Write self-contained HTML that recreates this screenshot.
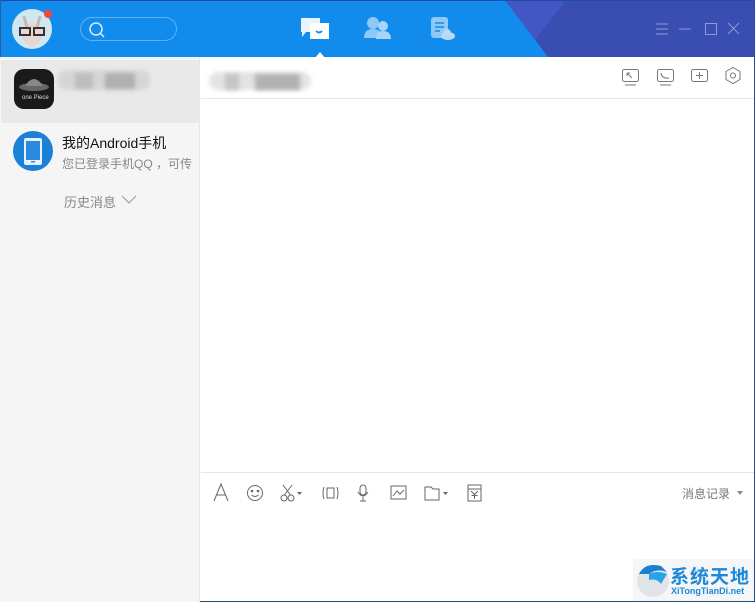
<!DOCTYPE html>
<html><head><meta charset="utf-8"><style>
*{margin:0;padding:0;box-sizing:border-box}
body{width:755px;height:602px;overflow:hidden;background:#fff;font-family:"Liberation Sans","Noto Sans CJK SC",sans-serif;position:relative}
.abs{position:absolute}
.side{left:0;top:57px;width:200px;height:545px;background:#f5f5f5;border-right:1px solid #e6e6e6}
.bl{filter:blur(2px)}
</style></head><body>
<div class="abs" style="left:0;top:0;width:755px;height:57px;background:#118bec"></div>
<svg class="abs" style="left:0;top:0" width="755" height="57">
<polygon points="505,0 755,0 755,57 548,57" fill="#3a4db0"/>
<polygon points="505,0 566,0 535,40" fill="#4357c4"/>
<rect x="0" y="0" width="755" height="1" fill="#1f4aa8"/>
</svg>
<div class="abs" style="left:0;top:0;width:1px;height:602px;background:#2a5fa8"></div>
<div class="abs" style="left:754px;top:0;width:1px;height:602px;background:#2a4a9a"></div>
<div class="abs" style="left:0;top:601px;width:755px;height:1px;background:#2a4a7a"></div>
<svg class="abs" style="left:12px;top:8px" width="44" height="42">
<circle cx="20" cy="21" r="20" fill="#cfe7ee"/>
<ellipse cx="20" cy="26" rx="10" ry="12" fill="#e8d6d0"/>
<path d="M12 8 L15 20 M28 8 L25 20" stroke="#c8b8b8" stroke-width="3"/>
<rect x="8" y="20" width="10" height="7" fill="none" stroke="#333" stroke-width="2"/>
<rect x="22" y="20" width="10" height="7" fill="none" stroke="#333" stroke-width="2"/>
<circle cx="36" cy="6" r="4" fill="#f04a3a"/>
</svg>
<div class="abs" style="left:80px;top:17px;width:97px;height:24px;border:1px solid #5db2f3;border-radius:12px"></div>
<svg class="abs" style="left:88px;top:21px" width="18" height="18"><circle cx="8" cy="8" r="6" fill="none" stroke="#d6ecfc" stroke-width="1.5"/><path d="M12 12 L16 16" stroke="#d6ecfc" stroke-width="1.5"/></svg>
<svg class="abs" style="left:298px;top:14px" width="34" height="44">
<path d="M3 4 H22 V18 H8 L4 23 V18 H3Z" fill="#e8f3fd"/>
<path d="M12 9 H31 V25 H12Z" fill="#fff"/>
<path d="M18 17 Q21 20 24 17" stroke="#118bec" stroke-width="1.8" fill="none"/>
<polygon points="17,44 22,38 27,44" fill="#fff"/>
</svg>
<svg class="abs" style="left:363px;top:16px" width="30" height="24">
<circle cx="10" cy="7" r="6" fill="#8ec8f6"/><path d="M1 22 Q1 13 10 13 Q19 13 19 22Z" fill="#8ec8f6"/>
<circle cx="20" cy="10" r="5" fill="#a9d5f8"/><path d="M13 23 Q13 15 20 15 Q28 15 28 23Z" fill="#a9d5f8"/>
</svg>
<svg class="abs" style="left:430px;top:16px" width="26" height="26">
<rect x="1" y="1" width="17" height="21" rx="3" fill="#8ec8f6"/>
<path d="M5 7H14M5 11H14M5 15H10" stroke="#118bec" stroke-width="1.5"/>
<ellipse cx="18" cy="20" rx="7" ry="4" fill="#b5dbf9"/><circle cx="17" cy="17" r="4" fill="#b5dbf9"/>
</svg>
<svg class="abs" style="left:650px;top:20px" width="95" height="18" stroke="#8d9ad8" fill="none" stroke-width="1">
<path d="M6 4H18M6 9H18M6 14H18"/><path d="M29 9H41"/><rect x="55.5" y="3.5" width="11" height="11"/><path d="M78 3L89 14M89 3L78 14"/>
</svg>
<div class="abs side"></div>
<div class="abs" style="left:1px;top:60px;width:198px;height:63px;background:#e9e9e9"></div>
<svg class="abs" style="left:14px;top:69px" width="40" height="40"><rect width="40" height="40" rx="10" fill="#1a1a1a"/><ellipse cx="20" cy="18" rx="15" ry="4" fill="#666"/><path d="M11 17 Q20 3 29 17Z" fill="#888"/><text x="8" y="30" font-size="6" fill="#ddd">one Piece</text></svg>
<div class="abs bl" style="left:58px;top:70px;width:92px;height:20px;background:#d6d6d6;border-radius:8px"></div>
<div class="abs bl" style="left:75px;top:73px;width:18px;height:16px;background:#bdbdbd"></div>
<div class="abs bl" style="left:105px;top:73px;width:30px;height:16px;background:#b0b0b0"></div>
<svg class="abs" style="left:13px;top:131px" width="40" height="40"><circle cx="20" cy="20" r="20" fill="#1a80d8"/><rect x="11" y="7" width="18" height="27" rx="2" fill="#e8f2fb"/><rect x="13" y="10" width="14" height="19" fill="#2a8ae0"/><rect x="18" y="30" width="4" height="1.5" fill="#2a8ae0"/></svg>
<div class="abs" style="left:62px;top:133px;font-size:14px;color:#111">我的Android手机</div>
<div class="abs" style="left:62px;top:155px;font-size:12px;color:#888">您已登录手机QQ ，可传</div>
<div class="abs" style="left:64px;top:192px;font-size:13px;color:#888">历史消息</div>
<svg class="abs" style="left:121px;top:195px" width="16" height="10"><path d="M1 1L8 8L15 1" stroke="#999" fill="none"/></svg>
<div class="abs bl" style="left:209px;top:72px;width:102px;height:18px;background:#e3e3e3;border-radius:9px"></div>
<div class="abs bl" style="left:225px;top:74px;width:14px;height:16px;background:#c4c4c4"></div>
<div class="abs bl" style="left:255px;top:74px;width:45px;height:16px;background:#b2b2b2"></div>
<div class="abs" style="left:201px;top:98px;width:553px;height:1px;background:#e6e6e6"></div>
<svg class="abs" style="left:620px;top:66px" width="125" height="22" stroke="#777" fill="none" stroke-width="1">
<rect x="2.5" y="3.5" width="16" height="12" rx="2"/><path d="M5 19H16M7 7L12 12M7 7H10M7 7V10"/>
<rect x="37.5" y="3.5" width="16" height="12" rx="2"/><path d="M40 19H51M41 7Q42 13 49 12"/>
<rect x="71.5" y="3.5" width="16" height="12" rx="2"/><path d="M79.5 6V13M76 9.5H83"/>
<path d="M113 1.5L120 5.5V13.5L113 17.5L106 13.5V5.5Z"/><circle cx="113" cy="9.5" r="2.5"/>
</svg>
<div class="abs" style="left:201px;top:472px;width:553px;height:1px;background:#e6e6e6"></div>
<svg class="abs" style="left:210px;top:482px" width="280" height="22" stroke="#666" fill="none" stroke-width="1">
<path d="M4 19L11 2L18 19M6.5 13H15.5"/>
<circle cx="45" cy="11" r="7.5"/><circle cx="42" cy="9" r=".8" fill="#666"/><circle cx="48" cy="9" r=".8" fill="#666"/><path d="M41.5 13Q45 16 48.5 13"/>
<circle cx="74" cy="16" r="3"/><circle cx="81" cy="16" r="3"/><path d="M74.5 13L82 3M80.5 13L73 3"/><path d="M87 10H92L89.5 13Z" fill="#666" stroke="none"/>
<path d="M114 5Q112 11 114 17M127 5Q129 11 127 17M117 6H124V16H117Z"/>
<rect x="150" y="3" width="6" height="10" rx="3"/><path d="M148 10Q153 18 158 10M153 15V19M150 19H156"/>
<rect x="181" y="4" width="15" height="13"/><path d="M183 14L187 9L190 12L194 8"/>
<path d="M215 5H221L223 7H229V18H215Z"/><path d="M233 10H238L235.5 13Z" fill="#666" stroke="none"/>
<rect x="258" y="3" width="13" height="16"/><path d="M258 7H271M261 9L264.5 12.5L268 9M264.5 12.5V17M261.5 13.5H267.5"/>
</svg>
<div class="abs" style="left:682px;top:485px;font-size:12px;color:#777">消息记录</div>
<svg class="abs" style="left:736px;top:490px" width="8" height="6"><path d="M1 1H7L4 5Z" fill="#888"/></svg>
<div class="abs" style="left:633px;top:559px;width:121px;height:42px;background:#f4f6f8"></div>
<svg class="abs" style="left:635px;top:560px" width="36" height="40"><circle cx="18" cy="21" r="16" fill="#e0e4e8"/><path d="M4 14Q10 2 26 6L32 12Q22 8 14 14Z" fill="#1a7fd0"/><path d="M14 14Q22 10 32 14L26 24Q22 18 14 20Z" fill="#2aa3e8"/></svg>
<div class="abs" style="left:670px;top:562px;font-size:19px;font-weight:bold;color:#1d88d6;letter-spacing:1px">系统天地</div>
<div class="abs" style="left:671px;top:586px;font-size:9px;font-weight:bold;color:#1d88d6">XiTongTianDi.net</div>
</body></html>
